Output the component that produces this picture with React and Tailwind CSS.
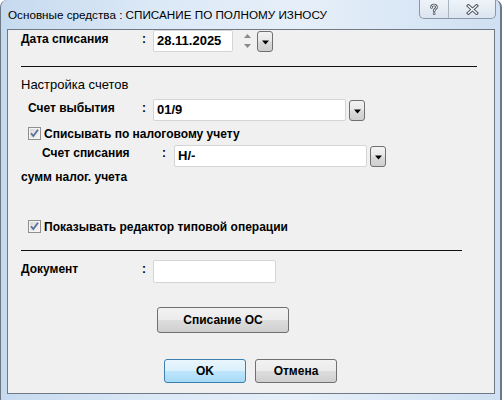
import React from "react";

const F = { fontFamily: '"Liberation Sans", Arial, sans-serif' };

function DropBtn({ className = "" }) {
  return (
    <div
      className={`w-[16px] h-[21px] rounded-[3px] border border-[#707070] bg-[linear-gradient(#f3f3f3,#e8e8e8_45%,#d9d9d9_55%,#cfcfcf)] flex items-center justify-center ${className}`}
    >
      <svg width="7" height="5" viewBox="0 0 7 5" className="mt-[2px]">
        <path d="M0 0.5H7L3.5 4.5Z" fill="#000" />
      </svg>
    </div>
  );
}

function Field({ className = "", children }) {
  return (
    <div
      className={`h-[22px] bg-white border border-[#d5d5d5] rounded-[2px] flex items-center pl-[3px] text-[13px] font-bold text-black ${className}`}
    >
      {children}
    </div>
  );
}

function Check() {
  return (
    <svg width="13" height="13" viewBox="0 0 13 13" className="shrink-0">
      <defs>
        <linearGradient id="cbg" x1="0" y1="0" x2="1" y2="1">
          <stop offset="0" stopColor="#d8d8d8" />
          <stop offset="1" stopColor="#f6f6f6" />
        </linearGradient>
      </defs>
      <rect x="0.5" y="0.5" width="12" height="12" fill="#f4f4f4" stroke="#8e8f8f" />
      <rect x="2" y="2" width="9" height="9" fill="url(#cbg)" />
      <path d="M3 6.2L5.3 9L10 2.8" fill="none" stroke="#5a6e99" strokeWidth="1.8" />
    </svg>
  );
}

function WinBtn({ children, className = "", primary = false }) {
  return (
    <div
      className={`flex items-center justify-center rounded-[3px] border text-[12px] font-bold text-black ${
        primary
          ? "border-[#3c7fb1] bg-[linear-gradient(#eaf6fd,#d9f0fc_48%,#bee6fd_52%,#a7d9f5)]"
          : "border-[#707070] bg-[linear-gradient(#f2f2f2,#ebebeb_48%,#dddddd_52%,#cfcfcf)]"
      } ${className}`}
    >
      {children}
    </div>
  );
}

const L = "text-[12px] font-bold leading-[14px]";

export default function App() {
  return (
    <div
      style={F}
      className="relative w-[502px] h-[400px] overflow-hidden bg-[linear-gradient(90deg,#c6daef,#dbe8f6_30%,#e6eff9_60%,#cfe0f2)] border-l border-r-2 border-[#6d7886] rounded-t-[7px]"
    >
      {/* title bar */}
      <div className="relative h-[29px] flex items-center pl-[7px]">
        <span className="text-[11.7px] text-black leading-none mt-[1px]">
          Основные средства : СПИСАНИЕ ПО ПОЛНОМУ ИЗНОСУ
        </span>
        <div className="absolute left-[418px] top-0 flex h-[19px] border border-t-0 border-[#8b97a6] rounded-b-[5px] bg-[linear-gradient(#eef3f9,#dbe5f0)] overflow-hidden">
          <div className="w-[29px] flex items-center justify-center border-r border-[#a9b4c1]">
            <svg width="10" height="13" viewBox="0 0 12 14">
              <path
                d="M3 4.5C3 2.5 4.3 1.6 6 1.6S9 2.6 9 4.2C9 6.2 6.2 6.3 6.2 8.8"
                fill="none"
                stroke="#4f5864"
                strokeWidth="3.2"
                strokeLinecap="round"
              />
              <circle cx="6.2" cy="12" r="1.6" fill="#4f5864" />
              <path
                d="M3 4.5C3 2.5 4.3 1.6 6 1.6S9 2.6 9 4.2C9 6.2 6.2 6.3 6.2 8.8"
                fill="none"
                stroke="#fff"
                strokeWidth="1.2"
                strokeLinecap="round"
              />
              <circle cx="6.2" cy="12" r="0.7" fill="#fff" />
            </svg>
          </div>
          <div className="w-[46px] flex items-center justify-center">
            <svg width="13" height="11" viewBox="0 0 14 12">
              <path d="M2.5 2L11.5 10M11.5 2L2.5 10" stroke="#4f5864" strokeWidth="3.6" strokeLinecap="square" />
              <path d="M2.5 2L11.5 10M11.5 2L2.5 10" stroke="#fff" strokeWidth="1.4" strokeLinecap="square" />
            </svg>
          </div>
        </div>
      </div>

      {/* client area */}
      <div className="ml-[6px] w-[488px] h-[365px] border border-[#6f7985] bg-[#f0f0f0] text-black">
        <div className="pl-[13px] flex flex-col">
          {/* Дата списания */}
          <div className="flex items-start h-[22px]">
            <div className={`w-[121px] mt-[2px] ${L}`}>Дата списания</div>
            <div className={`w-[11px] mt-[2px] ${L}`}>:</div>
            <Field className="w-[80px]">28.11.2025</Field>
            <div className="w-[14px] ml-[7px] h-[22px] flex flex-col items-center justify-between py-[4px]">
              <svg width="7" height="4" viewBox="0 0 7 4">
                <path d="M0 4H7L3.5 0Z" fill="#8a8a8a" />
              </svg>
              <svg width="7" height="4" viewBox="0 0 7 4">
                <path d="M0 0H7L3.5 4Z" fill="#8a8a8a" />
              </svg>
            </div>
            <DropBtn className="ml-[3px] mt-[1px]" />
          </div>

          <div className="mt-[14px] w-[456px] h-px bg-[#111]" />

          <div className="mt-[11px] text-[13px] leading-[14px]">Настройка счетов</div>

          {/* Счет выбытия */}
          <div className="mt-[7px] flex items-start h-[22px]">
            <div className={`w-[114px] ml-[7px] mt-[2px] ${L}`}>Счет выбытия</div>
            <div className={`w-[11px] mt-[2px] ${L}`}>:</div>
            <Field className="w-[193px]">01/9</Field>
            <DropBtn className="ml-[3px] mt-[1px]" />
          </div>

          {/* checkbox 1 */}
          <div className="mt-[6px] ml-[7px] flex items-center h-[13px] gap-[3px]">
            <Check />
            <span className={L}>Списывать по налоговому учету</span>
          </div>

          {/* Счет списания */}
          <div className="mt-[5px] flex items-start h-[22px]">
            <div className={`w-[120px] ml-[21px] mt-[1px] ${L}`}>Счет списания</div>
            <div className={`w-[12px] mt-[1px] ${L}`}>:</div>
            <Field className="w-[193px]">Н/-</Field>
            <DropBtn className="ml-[3px] mt-[1px]" />
          </div>

          <div className={`mt-[3px] ${L}`}>сумм налог. учета</div>

          {/* checkbox 2 */}
          <div className="mt-[36px] ml-[7px] flex items-center h-[13px] gap-[3px]">
            <Check />
            <span className={L}>Показывать редактор типовой операции</span>
          </div>

          <div className="mt-[17px] w-[441px] h-px bg-[#111]" />

          {/* Документ */}
          <div className="mt-[9px] flex items-start h-[22px]">
            <div className={`w-[121px] mt-[2px] ${L}`}>Документ</div>
            <div className={`w-[11px] mt-[2px] ${L}`}>:</div>
            <Field className="w-[123px] h-[23px]" />
          </div>

          <div className="mt-[25px] ml-[136px]">
            <WinBtn className="w-[132px] h-[26px]">Списание ОС</WinBtn>
          </div>

          <div className="mt-[26px] ml-[143px] flex gap-[9px]">
            <WinBtn primary className="w-[82px] h-[24px]">OK</WinBtn>
            <WinBtn className="w-[82px] h-[24px]">Отмена</WinBtn>
          </div>
        </div>
      </div>
    </div>
  );
}
